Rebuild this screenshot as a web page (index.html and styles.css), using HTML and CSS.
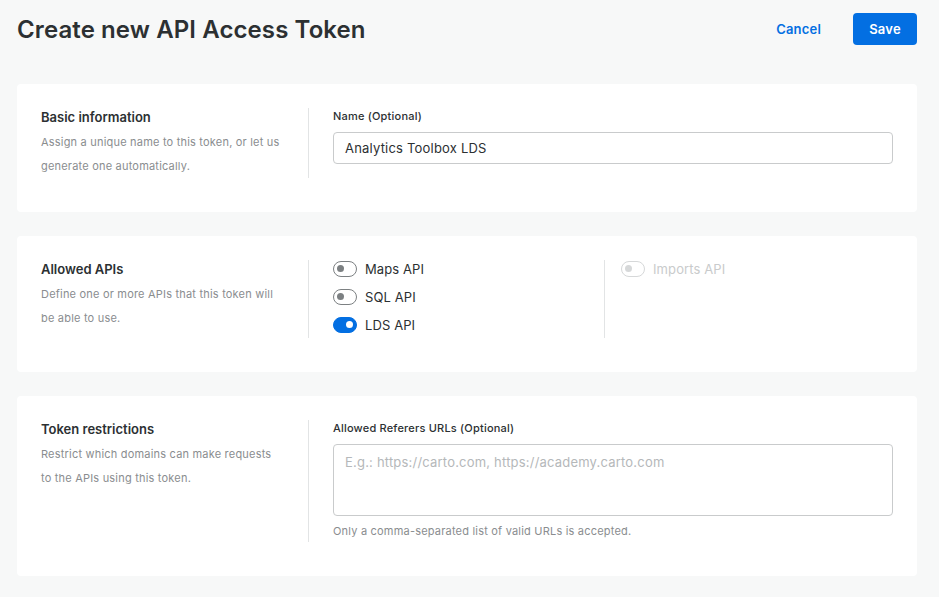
FILE: index.html
```html
<!DOCTYPE html>
<html lang="en">
<head>
<meta charset="utf-8">
<title>Create new API Access Token</title>
<link rel="stylesheet" href="styles.css">
</head>
<body>
<div class="page">
  <header class="topbar">
    <h1 class="page-title">Create new API Access Token</h1>
    <div class="actions">
      <button class="btn btn-text">Cancel</button>
      <button class="btn btn-primary">Save</button>
    </div>
  </header>

  <section class="card card-basic">
    <div class="card-info">
      <h2 class="card-title">Basic information</h2>
      <p class="card-desc">Assign a unique name to this token, or let us generate one automatically.</p>
    </div>
    <div class="card-body">
      <label class="field-label">Name (Optional)</label>
      <div class="input">Analytics Toolbox LDS</div>
    </div>
  </section>

  <section class="card card-apis">
    <div class="card-info">
      <h2 class="card-title">Allowed APIs</h2>
      <p class="card-desc">Define one or more APIs that this token will be able to use.</p>
    </div>
    <div class="card-body apis">
      <div class="api-group api-group-main">
        <div class="toggle-row"><span class="switch"></span><span class="toggle-label">Maps API</span></div>
        <div class="toggle-row"><span class="switch"></span><span class="toggle-label">SQL API</span></div>
        <div class="toggle-row"><span class="switch on"></span><span class="toggle-label">LDS API</span></div>
      </div>
      <div class="api-group api-group-extra">
        <div class="toggle-row disabled"><span class="switch"></span><span class="toggle-label">Imports API</span></div>
      </div>
    </div>
  </section>

  <section class="card card-restrict">
    <div class="card-info">
      <h2 class="card-title">Token restrictions</h2>
      <p class="card-desc">Restrict which domains can make requests to the APIs using this token.</p>
    </div>
    <div class="card-body">
      <label class="field-label">Allowed Referers URLs (Optional)</label>
      <div class="textarea">E.g.: https://carto.com, https://academy.carto.com</div>
      <p class="helper">Only a comma-separated list of valid URLs is accepted.</p>
    </div>
  </section>
</div>
</body>
</html>
```

FILE: styles.css
```css
* { box-sizing: border-box; }
html, body { margin: 0; padding: 0; }
body {
  background: #f7f8f8;
  font-family: Inter, "Noto Sans", "Liberation Sans", sans-serif;
  color: #2c3032;
  width: 939px;
  height: 597px;
  overflow: hidden;
}
.page {
  padding: 0 22px 0 17px;
}
.topbar {
  display: flex;
  align-items: center;
  justify-content: space-between;
  height: 58px;
  margin-bottom: 26px;
}
.page-title {
  margin: 0;
  font-size: 24px;
  font-weight: 600;
  letter-spacing: 0.1px;
  color: #2c3032;
}
.actions {
  display: flex;
  align-items: center;
  gap: 16px;
}
.btn {
  font-family: inherit;
  border: 0;
  height: 32px;
  border-radius: 4px;
  font-size: 13px;
  font-weight: 600;
  padding: 0 16px;
  cursor: pointer;
  letter-spacing: 0.2px;
}
.btn-text {
  background: transparent;
  color: #036fe2;
  padding: 0 16px;
}
.btn-primary {
  background: #036fe2;
  color: #fff;
  width: 64px;
}
.card {
  background: #fff;
  border-radius: 4px;
  display: flex;
  padding: 24px 24px 34px;
  margin-bottom: 24px;
}
.card-info {
  width: 268px;
  flex: none;
  padding-right: 24px;
  border-right: 1px solid #e2e4e5;
}
.card-title {
  margin: 0 0 4px;
  font-size: 13px;
  line-height: 18px;
  font-weight: 600;
  color: #2c3032;
}
.card-desc {
  margin: 0;
  font-size: 11px;
  line-height: 24px;
  letter-spacing: 0.2px;
  color: #8a8d8f;
}
.card-body {
  flex: 1;
  padding-left: 24px;
}
.field-label {
  display: block;
  font-size: 11px;
  line-height: 16px;
  font-weight: 500;
  letter-spacing: 0.2px;
  color: #2c3032;
  margin-bottom: 8px;
}
.input {
  height: 32px;
  border: 1px solid #c9cbcc;
  border-radius: 4px;
  padding: 0 11px;
  font-size: 13px;
  line-height: 30px;
  letter-spacing: 0.2px;
  color: #2c3032;
}
.textarea {
  height: 72px;
  border: 1px solid #c9cbcc;
  border-radius: 4px;
  padding: 8px 11px;
  font-size: 13px;
  line-height: 18px;
  letter-spacing: 0.2px;
  color: #b5b8ba;
}
.helper {
  margin: 6px 0 2px;
  font-size: 11px;
  line-height: 18px;
  letter-spacing: 0.2px;
  color: #8a8d8f;
}
.apis {
  display: flex;
  height: 78px;
}
.api-group-main {
  width: 272px;
  border-right: 1px solid #e2e4e5;
}
.api-group-extra {
  padding-left: 16px;
}
.toggle-row {
  display: flex;
  align-items: center;
  height: 18px;
  margin-bottom: 10px;
}
.switch {
  position: relative;
  width: 24px;
  height: 16px;
  border: 1.5px solid #7c8082;
  border-radius: 8px;
  flex: none;
  margin-right: 8px;
}
.switch::after {
  content: "";
  position: absolute;
  left: 3px;
  top: 3px;
  width: 7px;
  height: 7px;
  border-radius: 50%;
  background: #7c8082;
}
.switch.on {
  background: #036fe2;
  border-color: #036fe2;
}
.switch.on::after {
  left: auto;
  right: 3px;
  background: #fff;
}
.toggle-label {
  font-size: 13px;
  letter-spacing: 0.1px;
  color: #2c3032;
}
.disabled .switch { border-color: #d6d8d9; }
.disabled .switch::after { background: #d6d8d9; }
.disabled .toggle-label { color: #c9cbcc; }
```
